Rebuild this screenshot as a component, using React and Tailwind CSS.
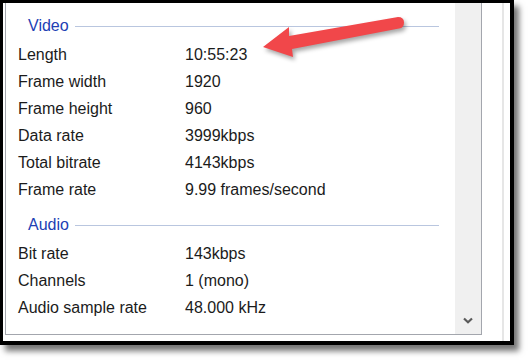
import React from 'react';

const sections = [
  {
    title: 'Video',
    rows: [
      ['Length', '10:55:23'],
      ['Frame width', '1920'],
      ['Frame height', '960'],
      ['Data rate', '3999kbps'],
      ['Total bitrate', '4143kbps'],
      ['Frame rate', '9.99 frames/second'],
    ],
  },
  {
    title: 'Audio',
    rows: [
      ['Bit rate', '143kbps'],
      ['Channels', '1 (mono)'],
      ['Audio sample rate', '48.000 kHz'],
    ],
  },
  { title: 'Media', rows: [] },
];

function GroupHeader({ title }) {
  return (
    <div className="flex items-center h-[30px] mt-[7px] pl-[22px] pr-[16px]">
      <span className="text-[#2140b4]">{title}</span>
      <div className="flex-1 h-px bg-[#b9c6df] ml-[6px]" />
    </div>
  );
}

function Row({ label, value }) {
  return (
    <div className="flex items-center h-[27px] pl-[12px] text-[#1b1b1b]">
      <span className="w-[167px] shrink-0">{label}</span>
      <span>{value}</span>
    </div>
  );
}

export default function App() {
  return (
    <div
      className="relative w-[528px] h-[362px] bg-white overflow-hidden text-[16px]"
      style={{ fontFamily: '"Liberation Sans", Arial, sans-serif' }}
    >
      <div className="w-[514px] h-[345px] border-black border-t-[3px] border-l-[3px] border-r-4 border-b-4 bg-white flex shadow-[5px_6px_6px_rgba(0,0,0,0.55)]">
        <div className="pl-[2px] flex flex-col">
          <div className="flex w-[477px] h-[332px] border-l border-r border-b border-[#a3a6ad]">
            <div className="flex-1 overflow-hidden pt-px">
              {sections.map((s) => (
                <div key={s.title}>
                  <GroupHeader title={s.title} />
                  {s.rows.map(([l, v]) => (
                    <Row key={l} label={l} value={v} />
                  ))}
                </div>
              ))}
            </div>
            <div className="w-[26px] bg-[#f0f0f0] flex flex-col justify-end items-center pb-[10px]">
              <svg width="10" height="7" viewBox="0 0 10 7">
                <path d="M1 1.5 L5 5.2 L9 1.5" fill="none" stroke="#5a5a5a" strokeWidth="2.2" />
              </svg>
            </div>
          </div>
        </div>
        <div className="w-[20px]" />
        <div className="w-[2px] bg-[#e6e6e6]" />
        <div className="w-[6px]" />
      </div>

      <svg
        className="absolute left-0 top-0 pointer-events-none"
        width="528"
        height="362"
        style={{ filter: 'drop-shadow(2px 3px 2px rgba(0,0,0,0.35))' }}
      >
        <path
          d="M263 47 L289 27 L289 36 L398 17 Q404 17 404 22.5 Q404 28 399 28.5 L292 49 L293 57 Z"
          fill="#f1474a"
        />
      </svg>
    </div>
  );
}
